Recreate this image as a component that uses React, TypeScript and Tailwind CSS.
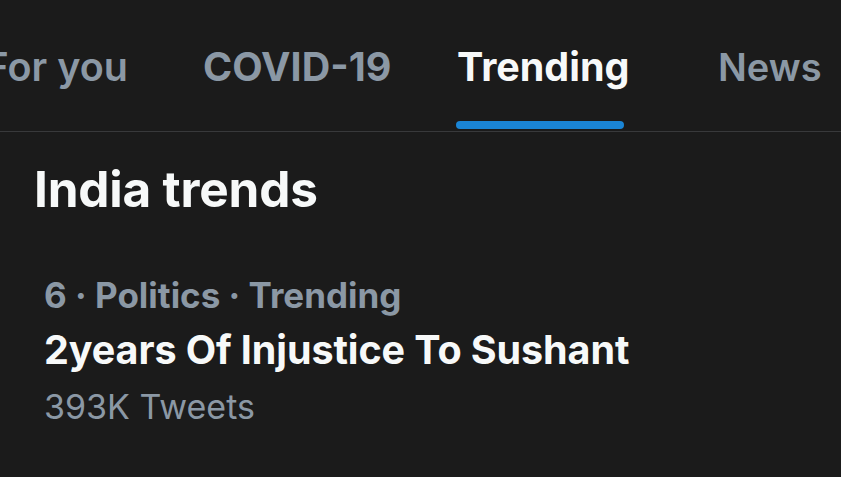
import React from "react";

export default function App() {
  return (
    <div
      className="w-[841px] h-[477px] overflow-hidden bg-[#1b1b1b]"
      style={{ fontFamily: "Inter, 'Noto Sans', sans-serif" }}
    >
      <div className="relative flex h-[132px] border-b border-[#38393b]">
        <div className="flex-none w-[203px] pr-[75px] flex justify-end items-start pt-[43px]">
          <span className="whitespace-nowrap text-[39.5px] leading-[48px] font-semibold text-[#8b98a5]">For you</span>
        </div>
        <div className="flex-none w-[254px] flex items-start pt-[43px]">
          <span className="whitespace-nowrap text-[39.5px] leading-[48px] font-bold text-[#8b98a5]">COVID-19</span>
        </div>
        <div className="flex-none w-[261px] relative flex items-start pt-[43px]">
          <span className="relative whitespace-nowrap text-[39.5px] leading-[48px] font-bold text-[#f7f9f9]">
            Trending
          </span>
          <div className="absolute left-[-1px] bottom-[2px] h-[8px] w-[168px] rounded-full bg-[#1a85d6]" />
        </div>
        <div className="flex-none flex items-start pt-[43px]">
          <span className="whitespace-nowrap text-[38px] leading-[48px] font-semibold text-[#8b98a5]">News</span>
        </div>
      </div>
      <div className="pl-[34px] pt-[27px]">
        <h2 className="text-[49.5px] font-bold text-[#f7f9f9] leading-[60px] tracking-[-0.2px]">India trends</h2>
      </div>
      <div className="pl-[44px] mt-[54px] flex flex-col">
        <div className="text-[35px] font-bold text-[#8b98a5] leading-[44px]">6 · Politics · Trending</div>
        <div className="mt-[5px] text-[39.5px] font-bold text-[#f7f9f9] leading-[56px] tracking-[-0.1px]">2years Of Injustice To Sushant</div>
        <div className="mt-[7px] text-[34px] font-normal text-[#8b98a5] leading-[44px]">393K Tweets</div>
      </div>
    </div>
  );
}
